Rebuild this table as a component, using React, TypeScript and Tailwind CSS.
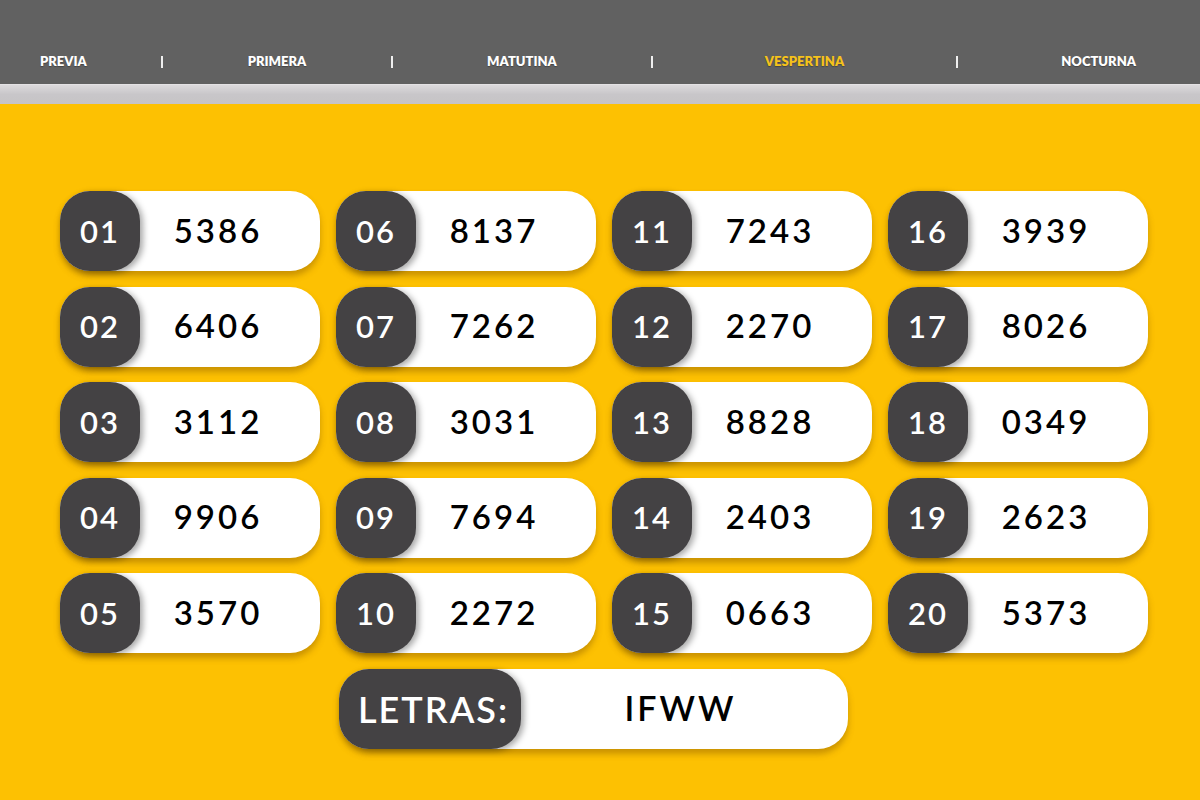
const results: { pos: string; num: string }[] = [
  { pos: '01', num: '5386' }, { pos: '06', num: '8137' }, { pos: '11', num: '7243' }, { pos: '16', num: '3939' },
  { pos: '02', num: '6406' }, { pos: '07', num: '7262' }, { pos: '12', num: '2270' }, { pos: '17', num: '8026' },
  { pos: '03', num: '3112' }, { pos: '08', num: '3031' }, { pos: '13', num: '8828' }, { pos: '18', num: '0349' },
  { pos: '04', num: '9906' }, { pos: '09', num: '7694' }, { pos: '14', num: '2403' }, { pos: '19', num: '2623' },
  { pos: '05', num: '3570' }, { pos: '10', num: '2272' }, { pos: '15', num: '0663' }, { pos: '20', num: '5373' },
];

function Sep() {
  return <div className="w-[2px] h-[12px] bg-white/90 flex-shrink-0" />;
}

function ResultCard({ pos, num }: { pos: string; num: string }) {
  return (
    <div className="grid h-[80px] rounded-[30px] bg-white shadow-[0_5px_6px_rgba(140,90,0,0.45)]">
      {/* Position badge */}
      <div className="col-start-1 row-start-1 justify-self-start h-[80px] flex items-center px-[20px] rounded-[30px] bg-[#444244] shadow-[3px_2px_6px_rgba(0,0,0,0.35)]">
        <span className="text-white text-[31px] font-semibold tracking-[2px] leading-none">{pos}</span>
      </div>
      <div className="col-start-1 row-start-1 place-self-center pl-[56px]">
        <span className="text-black text-[33px] font-semibold tracking-[3px] leading-none">{num}</span>
      </div>
    </div>
  );
}

export default function App() {
  return (
    <div className="w-[1200px] h-[800px] flex flex-col bg-[#fdc102] overflow-hidden" style={{ fontFamily: 'Lato, "Open Sans", sans-serif' }}>
      {/* Header nav */}
      <header className="h-[84px] flex-shrink-0 bg-[#616161] flex items-center pt-[40px] text-[13px] font-extrabold text-white [text-shadow:0_1px_1px_rgba(0,0,0,0.3)]">
        <div className="w-[161px] pl-[40px]">PREVIA</div>
        <Sep />
        <div className="w-[228px] text-center">PRIMERA</div>
        <Sep />
        <div className="w-[258px] text-center">MATUTINA</div>
        <Sep />
        <div className="w-[303px] text-center text-[#f5c21b]">VESPERTINA</div>
        <Sep />
        <div className="flex-1 text-right pr-[64px]">NOCTURNA</div>
      </header>
      <div className="h-[20px] flex-shrink-0 bg-gradient-to-b from-[#dcdadc] via-[#c8c6c9] to-[#c6c4c6] border-t border-[#e4e2e4]" />

      {/* Results */}
      <main className="flex-1 pt-[87px] pl-[60px]">
        <div className="w-[1088px] grid grid-cols-4 gap-x-[16px] gap-y-[15.5px]">
          {results.map((r) => (
            <ResultCard key={r.pos} pos={r.pos} num={r.num} />
          ))}
        </div>
        <div className="w-[1088px] pl-[279px] pt-[16px]">
          <div className="w-[509px] h-[80px] flex items-center rounded-[30px] bg-white shadow-[0_5px_6px_rgba(140,90,0,0.45)]">
            <div className="h-[80px] flex items-center pl-[19px] pr-[12px] rounded-[30px] bg-[#444244] shadow-[3px_2px_6px_rgba(0,0,0,0.35)]">
              <span className="text-white text-[36px] font-semibold tracking-[2px] leading-none">LETRAS:</span>
            </div>
            <div className="flex-1 text-center pr-[8px]">
              <span className="text-black text-[34px] font-semibold tracking-[3px] leading-none">IFWW</span>
            </div>
          </div>
        </div>
      </main>
    </div>
  );
}
